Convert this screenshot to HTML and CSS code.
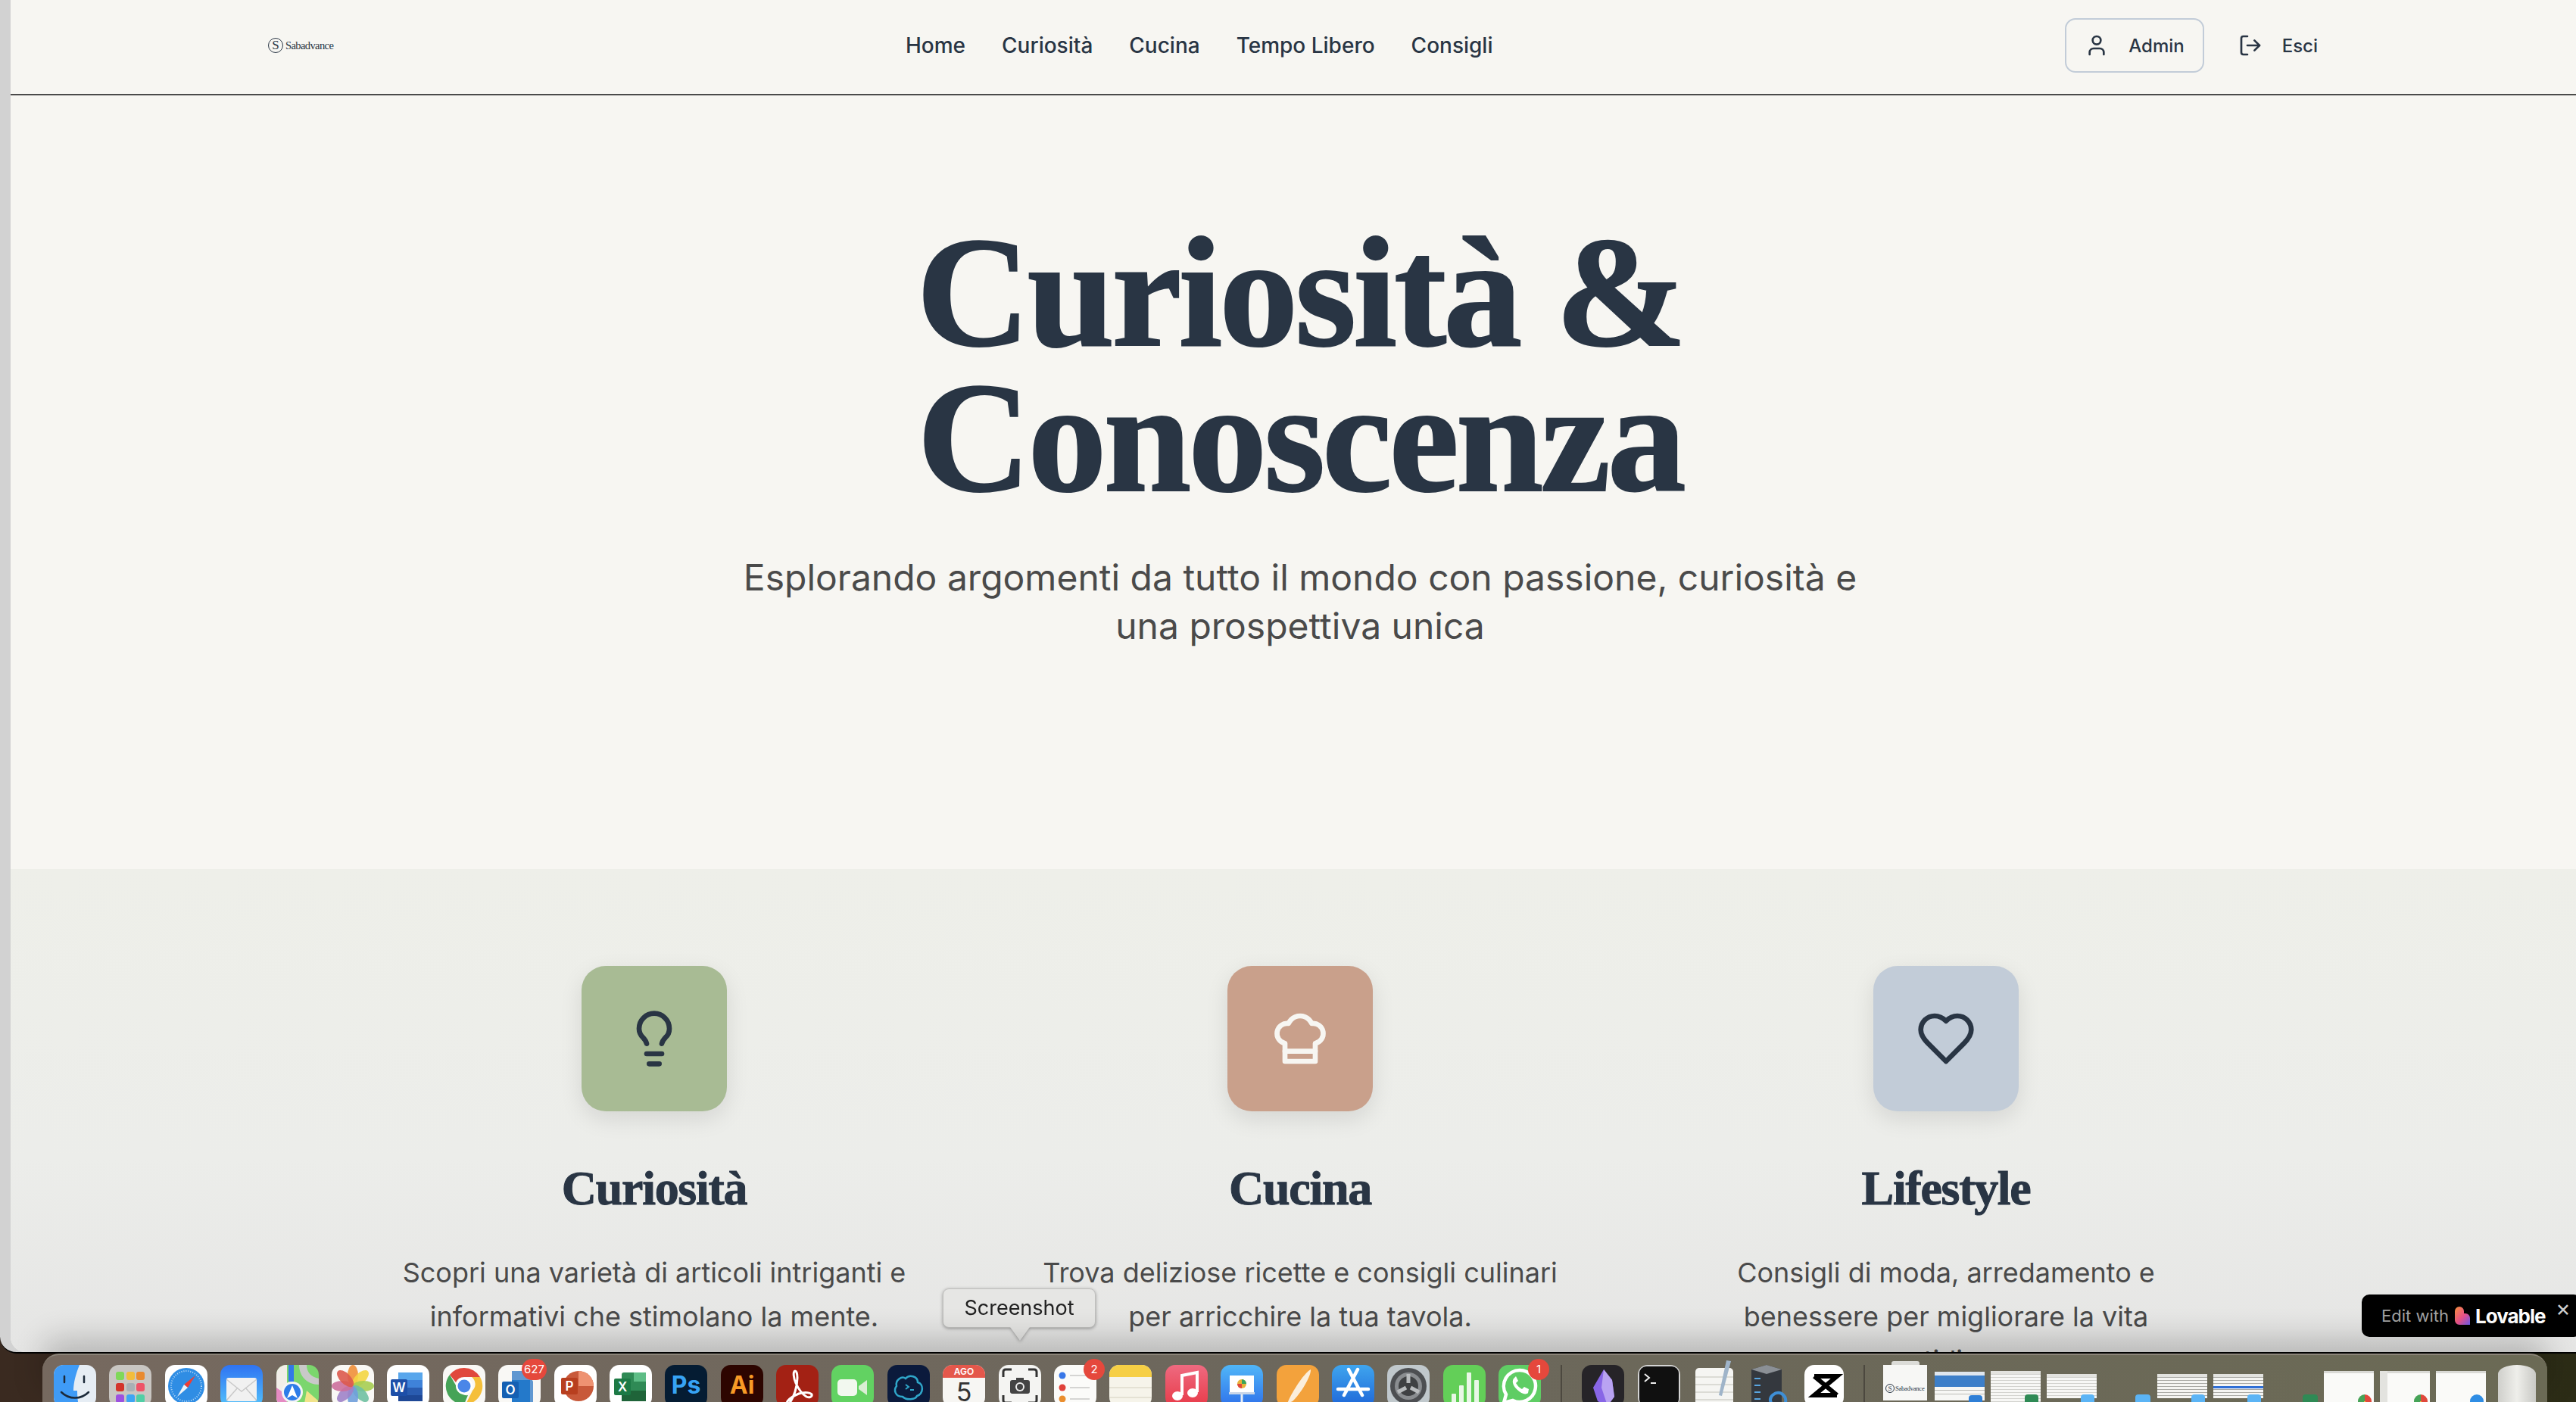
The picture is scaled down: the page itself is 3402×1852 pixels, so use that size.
FILE: index.html
```html
<!DOCTYPE html>
<html lang="it">
<head>
<meta charset="UTF-8">
<meta name="viewport" content="width=device-width, initial-scale=1.0">
<title>Sabadvance</title>
<link rel="stylesheet" href="styles.css">
</head>
<body>
<div class="window">
  <div class="page">
    <header class="topbar">
      <a class="logo" href="#"><span class="logo-mark">S</span><span class="logo-name">Sabadvance</span></a>
      <nav class="links">
        <a href="#">Home</a>
        <a href="#">Curiosità</a>
        <a href="#">Cucina</a>
        <a href="#">Tempo Libero</a>
        <a href="#">Consigli</a>
      </nav>
      <div class="actions">
        <a class="btn btn-outline" href="#">
          <svg class="btn-icon" viewBox="0 0 24 24"><path d="M19 21v-2a4 4 0 0 0-4-4H9a4 4 0 0 0-4 4v2"/><circle cx="12" cy="7" r="4"/></svg>
          Admin
        </a>
        <a class="btn" href="#">
          <svg class="btn-icon" viewBox="0 0 24 24"><path d="M9 21H5a2 2 0 0 1-2-2V5a2 2 0 0 1 2-2h4"/><polyline points="16 17 21 12 16 7"/><line x1="21" x2="9" y1="12" y2="12"/></svg>
          Esci
        </a>
      </div>
    </header>

    <section class="hero">
      <h1>Curiosità &amp;<br>Conoscenza</h1>
      <p>Esplorando argomenti da tutto il mondo con passione, curiosità e una prospettiva unica</p>
    </section>

    <section class="features">
      <div class="features-grid">
        <article class="card">
          <div class="tile tile-sage">
            <svg viewBox="0 0 24 24"><path d="M15 14c.2-1 .7-1.7 1.5-2.5 1-.9 1.5-2.2 1.5-3.5A6 6 0 0 0 6 8c0 1 .2 2.2 1.5 3.5.7.7 1.3 1.5 1.5 2.5"/><path d="M9 18h6"/><path d="M10 22h4"/></svg>
          </div>
          <h2>Curiosità</h2>
          <p>Scopri una varietà di articoli intriganti e informativi che stimolano la mente.</p>
        </article>
        <article class="card">
          <div class="tile tile-clay">
            <svg viewBox="0 0 24 24"><path d="M6 13.87A4 4 0 0 1 7.41 6a5.11 5.11 0 0 1 1.05-1.54 5 5 0 0 1 7.08 0A5.11 5.11 0 0 1 16.59 6 4 4 0 0 1 18 13.87V21H6Z"/><line x1="6" y1="17" x2="18" y2="17"/></svg>
          </div>
          <h2>Cucina</h2>
          <p>Trova deliziose ricette e consigli culinari per arricchire la tua tavola.</p>
        </article>
        <article class="card">
          <div class="tile tile-slate">
            <svg viewBox="0 0 24 24"><path d="M19 14c1.49-1.46 3-3.21 3-5.5A5.5 5.5 0 0 0 16.5 3c-1.76 0-3 .5-4.5 2-1.5-1.5-2.74-2-4.5-2A5.5 5.5 0 0 0 2 8.5c0 2.3 1.5 4.05 3 5.5l7 7Z"/></svg>
          </div>
          <h2>Lifestyle</h2>
          <p>Consigli di moda, arredamento e benessere per migliorare la vita quotidiana.</p>
        </article>
      </div>
    </section>
  </div>
</div>

<div class="lovable">
  <span class="lovable-edit">Edit with</span>
  <svg class="lovable-mark" viewBox="0 0 20 24"><defs><linearGradient id="lov" x1="0" y1="0" x2="1" y2="1"><stop offset="0" stop-color="#f7913a"/><stop offset=".55" stop-color="#e8508c"/><stop offset="1" stop-color="#6a5cf0"/></linearGradient></defs><path d="M0 6a6 6 0 0 1 12 0v3h2a6 6 0 0 1 6 6v9H6a6 6 0 0 1-6-6Z" fill="url(#lov)"/></svg>
  <span class="lovable-name">Lovable</span>
  <span class="lovable-close">×</span>
</div>

<div class="tooltip">Screenshot</div>

<footer class="dock">
  <div class="dock-apps">
    <div class="app"><svg viewBox="0 0 56 56"><rect width="56" height="56" fill="#e6edf4"/><path d="M0 0h34c-5 12-8 24-8 34h5c0 8 1 15 2 22H0Z" fill="#3f9bf6"/><path d="M14 15v8M40 15v8" stroke="#1c2a3a" stroke-width="2.5" stroke-linecap="round"/><path d="M10 36c10 10 26 10 36 0" fill="none" stroke="#1c2a3a" stroke-width="2.5" stroke-linecap="round"/></svg></div>
    <div class="app"><svg viewBox="0 0 56 56"><rect width="56" height="56" fill="#c9c6c2"/><rect x="9" y="9" width="11" height="11" rx="3" fill="#7fd858"/><rect x="23" y="9" width="11" height="11" rx="3" fill="#f2bd3c"/><rect x="36" y="9" width="11" height="11" rx="3" fill="#e98a2f"/><rect x="9" y="24" width="11" height="11" rx="3" fill="#d3342b"/><rect x="23" y="24" width="11" height="11" rx="3" fill="#a9b0b5"/><rect x="36" y="24" width="11" height="11" rx="3" fill="#ee5468"/><rect x="9" y="39" width="11" height="11" rx="3" fill="#9d50e0"/><rect x="23" y="39" width="11" height="11" rx="3" fill="#3da5f4"/><rect x="36" y="39" width="11" height="11" rx="3" fill="#50cfa5"/></svg></div>
    <div class="app"><svg viewBox="0 0 56 56"><rect width="56" height="56" fill="#fff"/><circle cx="28" cy="28" r="24" fill="#2f8de4"/><circle cx="28" cy="28" r="20" fill="none" stroke="#bcdcf7" stroke-width="2" stroke-dasharray="1 2"/><path d="M40 14 25 26l5 4Z" fill="#ef3d33"/><path d="M16 42l9-16 5 4Z" fill="#eef3f7"/></svg></div>
    <div class="app"><svg viewBox="0 0 56 56"><defs><linearGradient id="mail" x1="0" y1="0" x2="0" y2="1"><stop offset="0" stop-color="#2f73f2"/><stop offset="1" stop-color="#53c3fb"/></linearGradient></defs><rect width="56" height="56" fill="url(#mail)"/><rect x="8" y="17" width="40" height="31" rx="3" fill="#f1f1f1"/><path d="M8 19l20 16 20-16M8 47l15-17M48 47 33 30" fill="none" stroke="#c9c9c9" stroke-width="1.5"/></svg></div>
    <div class="app"><svg viewBox="0 0 56 56"><rect width="56" height="56" fill="#7bd66d"/><path d="M0 0h14v56H0Z" fill="#f1eee8"/><path d="M0 30 14 40v16H0Z" fill="#e58bc3"/><path d="M16 0h7v22h-7Z" fill="#3179e8"/><path d="M30 0h10c0 10 6 16 16 18v8C40 26 30 14 30 0Z" fill="#c9c9c9"/><path d="M40 34 56 48v8H36Z" fill="#f1e38a"/><circle cx="21" cy="36" r="14" fill="#f4f4f4"/><circle cx="21" cy="36" r="11" fill="#2d7ce8"/><path d="M21 27l7 17-7-4-7 4Z" fill="#fff"/></svg></div>
    <div class="app"><svg viewBox="0 0 56 56"><rect width="56" height="56" fill="#f9f8f5"/><g transform="translate(28 28)"><ellipse cy="-14" rx="7" ry="14" fill="#ef8f3a" opacity=".9"/><ellipse cy="-14" rx="7" ry="14" fill="#f3d544" opacity=".9" transform="rotate(45)"/><ellipse cy="-14" rx="7" ry="14" fill="#a6cd52" opacity=".9" transform="rotate(90)"/><ellipse cy="-14" rx="7" ry="14" fill="#6fc0a2" opacity=".9" transform="rotate(135)"/><ellipse cy="-14" rx="7" ry="14" fill="#6f9fdb" opacity=".9" transform="rotate(180)"/><ellipse cy="-14" rx="7" ry="14" fill="#9f82c9" opacity=".9" transform="rotate(225)"/><ellipse cy="-14" rx="7" ry="14" fill="#cc6f9c" opacity=".9" transform="rotate(270)"/><ellipse cy="-14" rx="7" ry="14" fill="#dc5a4e" opacity=".9" transform="rotate(315)"/></g></svg></div>
    <div class="app"><svg viewBox="0 0 56 56"><rect width="56" height="56" fill="#fff"/><rect x="15" y="10" width="32" height="38" rx="3" fill="#3f82d9"/><rect x="15" y="10" width="32" height="10" fill="#58a6ec"/><rect x="15" y="30" width="32" height="10" fill="#2a5cb0"/><rect x="15" y="40" width="32" height="8" fill="#1e4896"/><rect x="5" y="19" width="22" height="22" rx="2" fill="#1d4fa8"/><text class="dock-letter" x="16" y="36" font-size="17">W</text></svg></div>
    <div class="app"><svg viewBox="0 0 56 56"><rect width="56" height="56" fill="#f9f8f5"/><path d="M28 4a24 24 0 0 1 21 12H28a12 12 0 0 0-11 7L9 13A24 24 0 0 1 28 4Z" fill="#e0483c"/><path d="M49 16a24 24 0 0 1-19 36l9-18a12 12 0 0 0-1-18Z" fill="#f5bf3a"/><path d="M9 13l12 21a12 12 0 0 0 12 6l-5 12A24 24 0 0 1 9 13Z" fill="#46a357"/><circle cx="28" cy="28" r="11" fill="#fff"/><circle cx="28" cy="28" r="8.5" fill="#4a86e8"/></svg></div>
    <div class="app"><svg viewBox="0 0 56 56"><rect width="56" height="56" fill="#f9f8f5"/><rect x="18" y="20" width="24" height="30" fill="#2f8fdc"/><path d="M18 8h20l8 14v28H18Z" fill="#1f6fc2" opacity=".7"/><rect x="5" y="22" width="22" height="22" rx="2" fill="#1560b3"/><text class="dock-letter" x="16" y="39" font-size="17">O</text></svg></div>
    <div class="app"><svg viewBox="0 0 56 56"><rect width="56" height="56" fill="#fff"/><circle cx="32" cy="28" r="20" fill="#c8593a"/><path d="M32 8a20 20 0 0 1 20 20H32Z" fill="#ee9272"/><rect x="9" y="17" width="22" height="22" rx="2" fill="#b83f1f"/><text class="dock-letter" x="20" y="34" font-size="17">P</text></svg></div>
    <div class="app"><svg viewBox="0 0 56 56"><rect width="56" height="56" fill="#fff"/><rect x="16" y="10" width="32" height="38" rx="3" fill="#2f8a55"/><rect x="32" y="10" width="16" height="12" fill="#5ebd86"/><rect x="16" y="34" width="32" height="14" fill="#1f6439"/><rect x="6" y="18" width="22" height="22" rx="2" fill="#1d7a45"/><text class="dock-letter" x="17" y="35" font-size="17">X</text></svg></div>
    <div class="app"><svg viewBox="0 0 56 56"><rect width="56" height="56" fill="#051c33"/><text class="dock-brand" x="28" y="38" font-size="32" fill="#37a3f5">Ps</text></svg></div>
    <div class="app"><svg viewBox="0 0 56 56"><rect width="56" height="56" fill="#2d0500"/><text class="dock-brand" x="28" y="38" font-size="32" fill="#f89a26">Ai</text></svg></div>
    <div class="app"><svg viewBox="0 0 56 56"><rect width="56" height="56" fill="#a32114"/><path d="M25 8c-3 0-2 10 1 16 3 7 8 14 14 18 4 2 8 0 7-3-1-2-8-4-17-1-5 2-12 6-15 10-2 3 1 5 3 2 5-7 10-20 10-33 0-5-1-9-3-9Z" fill="none" stroke="#fff" stroke-width="3"/></svg></div>
    <div class="app"><svg viewBox="0 0 56 56"><rect width="56" height="56" fill="#62d262"/><rect x="8" y="19" width="26" height="22" rx="5" fill="#f2f8ef"/><path d="M36 28l11-8v20l-11-8Z" fill="#d9eed4"/></svg></div>
    <div class="app"><svg viewBox="0 0 56 56"><rect width="56" height="56" fill="#0b1a3c"/><path d="M20 42c-10 0-12-9-8-14-2-8 7-14 12-10 5-6 16-3 16 5 8 2 8 15-1 18-2 5-14 6-19 1Z" fill="none" stroke="#2fa6c9" stroke-width="2.5"/><path d="M24 26l4 3-4 3M30 33h5" fill="none" stroke="#2fa6c9" stroke-width="2"/></svg></div>
    <div class="app"><svg viewBox="0 0 56 56"><rect width="56" height="56" fill="#f7f6f3"/><rect width="56" height="17" fill="#e4574b"/><text class="dock-letter" x="28" y="13" font-size="12">AGO</text><text class="dock-day" x="28" y="48" font-size="34">5</text></svg></div>
    <div class="app"><svg viewBox="0 0 56 56"><rect width="56" height="56" fill="#f4f4f2"/><path d="M6 16V9a3 3 0 0 1 3-3h8M39 6h8a3 3 0 0 1 3 3v7M50 40v7a3 3 0 0 1-3 3h-8M17 50H9a3 3 0 0 1-3-3v-7" fill="none" stroke="#333" stroke-width="3"/><rect x="15" y="20" width="26" height="18" rx="3" fill="#444"/><rect x="23" y="17" width="10" height="4" fill="#444"/><circle cx="28" cy="29" r="6" fill="#eee"/><circle cx="28" cy="29" r="4" fill="#444"/></svg></div>
    <div class="app"><svg viewBox="0 0 56 56"><rect width="56" height="56" fill="#fbfbf9"/><circle cx="11" cy="14" r="4.5" fill="#3877e8"/><circle cx="11" cy="30" r="4.5" fill="#e0423a"/><circle cx="11" cy="45" r="4.5" fill="#ea8e2e"/><path d="M21 14h26M21 30h26M21 45h26" stroke="#c9c9c6" stroke-width="1.5"/></svg></div>
    <div class="app"><svg viewBox="0 0 56 56"><rect width="56" height="56" fill="#f6f4ea"/><rect width="56" height="16" fill="#f6cf45"/><path d="M0 30h56M0 43h56" stroke="#dfdccd" stroke-width="1.5"/></svg></div>
    <div class="app"><svg viewBox="0 0 56 56"><defs><linearGradient id="music" x1="0" y1="0" x2="0" y2="1"><stop offset="0" stop-color="#ee6a80"/><stop offset="1" stop-color="#e83a48"/></linearGradient></defs><rect width="56" height="56" fill="url(#music)"/><path d="M22 40V14l20-4v26" fill="none" stroke="#fff" stroke-width="4"/><ellipse cx="16" cy="41" rx="7" ry="6" fill="#fff"/><ellipse cx="36" cy="37" rx="7" ry="6" fill="#fff"/></svg></div>
    <div class="app"><svg viewBox="0 0 56 56"><defs><linearGradient id="keynote" x1="0" y1="0" x2="0" y2="1"><stop offset="0" stop-color="#50b6f8"/><stop offset="1" stop-color="#2f71ea"/></linearGradient></defs><rect width="56" height="56" fill="url(#keynote)"/><rect x="12" y="14" width="32" height="24" fill="#fff"/><rect x="11" y="36" width="34" height="3" fill="#c9d6e8"/><circle cx="28" cy="25" r="6" fill="#e8b23a"/><path d="M28 25V19a6 6 0 0 1 6 6Z" fill="#3aa55c"/><path d="M28 25h-6a6 6 0 0 0 6 6Z" fill="#e0483c"/><rect x="26.5" y="39" width="3" height="14" fill="#e6edf6"/></svg></div>
    <div class="app"><svg viewBox="0 0 56 56"><rect width="56" height="56" fill="#f3a23c"/><path d="M45 6c1 8-13 32-24 42l-7 3 3-7C23 32 37 10 45 6Z" fill="#fbeedb"/><rect x="8" y="52" width="40" height="2" fill="#fbeedb"/></svg></div>
    <div class="app"><svg viewBox="0 0 56 56"><defs><linearGradient id="store" x1="0" y1="0" x2="0" y2="1"><stop offset="0" stop-color="#3fa5ee"/><stop offset="1" stop-color="#1e66d8"/></linearGradient></defs><rect width="56" height="56" fill="url(#store)"/><path d="M22 6l18 34M34 6 16 40M8 32h40" stroke="#fff" stroke-width="4.5" fill="none" stroke-linecap="round"/></svg></div>
    <div class="app"><svg viewBox="0 0 56 56"><rect width="56" height="56" fill="#c0c8cc"/><circle cx="28" cy="28" r="24" fill="#4d4f52"/><circle cx="28" cy="28" r="18" fill="#8a8d90"/><circle cx="28" cy="28" r="13" fill="#3f4143"/><path d="M28 12v12M14 36l11-6M42 36l-11-6" stroke="#b9bcbe" stroke-width="5"/></svg></div>
    <div class="app"><svg viewBox="0 0 56 56"><rect width="56" height="56" fill="#63cf58"/><rect x="11" y="38" width="6" height="18" rx="1" fill="#e9f7e6"/><rect x="21" y="27" width="6" height="29" rx="1" fill="#e9f7e6"/><rect x="31" y="10" width="6" height="46" rx="1" fill="#e9f7e6"/><rect x="41" y="20" width="6" height="36" rx="1" fill="#e9f7e6"/></svg></div>
    <div class="app"><svg viewBox="0 0 56 56"><rect width="56" height="56" fill="#5fcd64"/><path d="M28 7a21 21 0 0 0-18 32L7 50l12-3A21 21 0 1 0 28 7Z" fill="none" stroke="#fff" stroke-width="4.5"/><path d="M20 18c-3 4 0 11 5 15 5 5 11 7 14 4l1-5-6-3-3 3c-4-2-6-5-8-8l3-3-3-6Z" fill="#fff"/></svg></div>
  </div>
  <div class="dock-sep"></div>
  <div class="dock-apps">
    <div class="app"><svg viewBox="0 0 56 56"><rect width="56" height="56" fill="#262428"/><path d="M29 6 15 30l6 18 13 6 9-12-3-22Z" fill="#8866e6"/><path d="M29 6l-3 24 8 24 9-12-3-22Z" fill="#b9a3f2"/></svg></div>
    <div class="app app-terminal"><svg viewBox="0 0 56 56"><rect width="56" height="56" fill="#d4d4d4"/><rect x="2" y="2" width="52" height="52" rx="9" fill="#101010"/><path d="M9 12l6 5-6 5" fill="none" stroke="#eee" stroke-width="2"/><path d="M17 24h7" stroke="#eee" stroke-width="2"/></svg></div>
    <div class="app app-plain"><svg viewBox="0 0 56 56"><rect x="3" y="4" width="50" height="52" rx="5" fill="#f5f5f2"/><path d="M3 16h50M3 26h50M3 36h50M3 46h50" stroke="#d2d2cc" stroke-width="1.5"/><path d="M44-6 34 40l4 1L50-5Z" fill="#9fb4c9"/></svg></div>
    <div class="app app-plain"><svg viewBox="0 0 56 56"><path d="M4 6 24 0l20 6v44H4Z" fill="#34383e"/><path d="M4 6l20-6 20 6-20 6Z" fill="#8b9096"/><path d="M8 18h8M8 27h8M8 36h8M8 45h8" stroke="#59a6e0" stroke-width="2"/><path d="M30 50c-4-8 6-16 14-12 6 4 8 12 0 18" fill="none" stroke="#3f8fd6" stroke-width="4"/></svg></div>
    <div class="app app-capcut"><svg viewBox="0 0 56 56"><rect width="56" height="56" fill="#fff"/><path d="M13 15h30L13 40h30M13 15l30 25" fill="none" stroke="#000" stroke-width="6"/></svg></div>
  </div>
  <div class="dock-sep dock-sep-docs"></div>
  <div class="dock-docs">
    <div class="thumb thumb-doc"><span class="logo-mark">S</span><span class="logo-name">Sabadvance</span></div>
    <div class="thumb thumb-mail"><span class="badge badge-blue"></span></div>
    <div class="thumb thumb-sheet"><span class="badge badge-green"></span></div>
    <div class="thumb thumb-sheet thumb-low"><span class="badge badge-sky"></span></div>
    <div class="lone-badge badge-sky"></div>
    <div class="thumb thumb-list thumb-low"><span class="badge badge-sky"></span></div>
    <div class="thumb thumb-list thumb-low thumb-selected"><span class="badge badge-sky"></span></div>
    <div class="lone-badge lone-badge-last badge-green"></div>
    <div class="thumb thumb-page"><span class="badge badge-chrome"></span></div>
    <div class="thumb thumb-page thumb-side"><span class="badge badge-chrome"></span></div>
    <div class="thumb thumb-page"><span class="badge badge-safari"></span></div>
    <div class="trash"></div>
  </div>
  <span class="count count-outlook">627</span>
  <span class="count count-reminders">2</span>
  <span class="count count-whatsapp">1</span>
</footer>
</body>
</html>
```

FILE: styles.css
```css
* {
    box-sizing: border-box;
}
html, body {
    margin: 0;
    height: 1852px;
    overflow: hidden;
}
body {
    position: relative;
    font-family: Inter, "Noto Sans", sans-serif;
    color: #293544;
    background: linear-gradient(90deg, #3a2a20 0%, #3a3020 50%, #2c2c16 100%);
}
a {
    color: inherit;
    text-decoration: none;
}

/* browser window */
.window {
    height: 1788px;
    padding-left: 14px;
    background: #d2d2d2;
    border-bottom: 2px solid #000;
    border-bottom-left-radius: 22px;
    overflow: hidden;
}
.page {
    width: 3406px;
    height: 1786px;
    background: #f7f6f2;
    border-bottom-left-radius: 20px;
    overflow: hidden;
}

/* top bar */
.topbar {
    display: flex;
    justify-content: space-between;
    align-items: center;
    height: 126px;
    padding: 0 335px 4px 340px;
    border-bottom: 2px solid #4a4a4a;
}
.logo {
    display: flex;
    align-items: center;
    gap: 3px;
}
.logo-mark {
    display: flex;
    justify-content: center;
    align-items: center;
    width: 20px;
    height: 20px;
    border: 1px solid #293544;
    border-radius: 50%;
    font-family: "Liberation Serif", serif;
    font-size: 17px;
}
.logo-name {
    font-family: "Liberation Serif", serif;
    font-size: 14.5px;
    letter-spacing: -.6px;
}
.links {
    display: flex;
    gap: 48px;
    font-size: 28px;
    font-weight: 500;
}
.actions {
    display: flex;
    align-items: center;
    gap: 21px;
    font-size: 24px;
    font-weight: 500;
}
.btn {
    display: flex;
    align-items: center;
    gap: 26px;
    height: 72px;
    padding: 0 24px;
}
.btn-outline {
    border: 2px solid #c2ccd8;
    border-radius: 14px;
}
.btn-icon {
    width: 32px;
    height: 32px;
    fill: none;
    stroke: #293544;
    stroke-width: 2;
    stroke-linecap: round;
    stroke-linejoin: round;
}

/* hero */
.hero {
    height: 1022px;
    padding-top: 164px;
    text-align: center;
}
.hero h1 {
    margin: 0;
    font-family: "Liberation Serif", serif;
    font-size: 208px;
    font-weight: 700;
    line-height: 192px;
    letter-spacing: -4px;
    -webkit-text-stroke: 2px #293544;
}
.hero p {
    width: 1530px;
    margin: 57px auto 0;
    font-size: 48px;
    line-height: 64px;
    color: #4a4a4a;
}

/* features */
.features {
    height: 638px;
    padding-top: 128px;
    background: linear-gradient(180deg, #eeefe9 0%, #ecedea 60%, #e5e5e4 100%);
}
.features-grid {
    display: grid;
    grid-template-columns: repeat(3, 789px);
    justify-content: center;
    gap: 64px;
}
.card {
    text-align: center;
}
.tile {
    display: flex;
    justify-content: center;
    align-items: center;
    width: 192px;
    height: 192px;
    margin: 0 auto;
    border-radius: 32px;
    box-shadow: 0 10px 30px rgba(0, 0, 0, .1);
}
.tile svg {
    width: 80px;
    height: 80px;
    fill: none;
    stroke: #293544;
    stroke-width: 2;
    stroke-linecap: round;
    stroke-linejoin: round;
}
.tile-sage {
    background: #a8bb94;
}
.tile-clay {
    background: #c9a08b;
}
.tile-clay svg {
    stroke: #f7f6f2;
}
.tile-slate {
    background: #c2ccd8;
}
.card h2 {
    margin: 62px 0 0;
    font-family: "Liberation Serif", serif;
    font-size: 64px;
    font-weight: 700;
    line-height: 80px;
    letter-spacing: -1.3px;
    -webkit-text-stroke: 1px #293544;
}
.card p {
    width: 700px;
    margin: 42px auto 0;
    font-size: 36px;
    line-height: 58px;
    color: #4a4a4a;
}

/* overlays */
.lovable {
    position: absolute;
    left: 3119px;
    top: 1710px;
    display: flex;
    align-items: center;
    width: 290px;
    height: 56px;
    padding-left: 26px;
    background: #000;
    border-radius: 10px;
}
.lovable-edit {
    font-size: 22px;
    color: #a3a3a3;
}
.lovable-mark {
    width: 20px;
    height: 24px;
    margin-left: 8px;
}
.lovable-name {
    margin-left: 7px;
    font-size: 26px;
    font-weight: 700;
    letter-spacing: -1px;
    color: #fff;
}
.lovable-close {
    position: absolute;
    left: 256px;
    top: 0;
    font-size: 30px;
    color: #ccc;
}
.tooltip {
    position: absolute;
    left: 1245px;
    top: 1702px;
    width: 202px;
    height: 52px;
    border: 1px solid #bfbfbd;
    border-radius: 8px;
    background: #e6e6e4;
    font-size: 27px;
    line-height: 50px;
    text-align: center;
    color: #222;
    filter: drop-shadow(0 1px 2px rgba(0, 0, 0, .35));
}
.tooltip::after {
    content: "";
    position: absolute;
    left: 88px;
    top: 50px;
    border: 13px solid transparent;
    border-top: 18px solid #e6e6e4;
    border-bottom: 0;
}

/* dock */
.dock {
    position: absolute;
    left: 56px;
    top: 1788px;
    display: flex;
    width: 3308px;
    height: 64px;
    padding: 13px 0 0 15px;
    overflow: hidden;
    background: linear-gradient(90deg, #76695f 0%, #6c675c 50%, #6b6a55 100%);
    border-top: 2px solid #8b8479;
    border-radius: 22px 22px 0 0;
    box-shadow: 0 -20px 40px rgba(0, 0, 0, .2);
}
.dock-apps {
    display: flex;
    gap: 17.4px;
}
.app {
    flex: none;
    width: 56px;
    height: 56px;
    border-radius: 13px;
    overflow: hidden;
}
.app svg {
    display: block;
    width: 56px;
    height: 56px;
}
.app-plain {
    overflow: visible;
}
.app-plain svg {
    overflow: visible;
}
.app-capcut {
    width: 52px;
}
.dock-letter {
    font-family: Inter, sans-serif;
    font-weight: 600;
    text-anchor: middle;
    fill: #fff;
}
.dock-day {
    font-family: Inter, sans-serif;
    text-anchor: middle;
    fill: #333;
}
.dock-brand {
    font-family: Inter, sans-serif;
    font-weight: 700;
    text-anchor: middle;
}
.dock-sep {
    flex: none;
    width: 2px;
    height: 50px;
    margin: 0 26px;
    background: #4c483f;
}
.dock-sep-docs {
    margin: 0 24px 0 26px;
}
.dock-docs {
    display: flex;
    gap: 8px;
}
.thumb {
    position: relative;
    flex: none;
    width: 66px;
    height: 44px;
    margin-top: 8px;
    background: #f7f7f5;
}
.thumb-low {
    height: 32px;
    margin-top: 12px;
}
.thumb-doc {
    display: flex;
    justify-content: center;
    align-items: center;
    gap: 1px;
    width: 58px;
    height: 47px;
    margin: 0 2px 0 0;
    padding-top: 14px;
}
.thumb-doc::before {
    content: "";
    position: absolute;
    left: 11px;
    top: -5px;
    width: 37px;
    height: 5px;
    background: #dcdcd8;
    border-radius: 3px 3px 0 0;
}
.thumb-doc .logo-mark {
    flex: none;
    width: 12px;
    height: 12px;
    font-size: 9px;
}
.thumb-doc .logo-name {
    font-size: 8.5px;
    letter-spacing: -.2px;
}
.thumb-mail {
    height: 38px;
    margin-top: 9px;
    background: linear-gradient(180deg, #dfe6ee 0 5px, #3d7fc9 5px 20px, #f7f7f5 20px 24px, #bcbcb8 24px 25px, #f7f7f5 25px 29px, #bcbcb8 29px 30px, #f7f7f5 30px);
}
.thumb-sheet {
    background: linear-gradient(180deg, #e3e3df 0 4px, transparent 4px 100%) no-repeat, repeating-linear-gradient(180deg, #d2d2ce 0 1px, #f7f7f5 1px 4px);
}
.thumb-list {
    background: linear-gradient(180deg, #e3e3df 0 4px, transparent 4px 100%) no-repeat, repeating-linear-gradient(180deg, #a9a9a4 0 1px, #f5f5f2 1px 4px);
}
.thumb-selected {
    background: linear-gradient(180deg, transparent 0 16px, #2f6fd6 16px 19px, transparent 19px), linear-gradient(180deg, #e3e3df 0 4px, transparent 4px 100%) no-repeat, repeating-linear-gradient(180deg, #a9a9a4 0 1px, #f5f5f2 1px 4px);
}
.thumb-page {
    background: linear-gradient(180deg, #d9d9d5 0 3px, #fafaf8 3px);
}
.thumb-side {
    background: linear-gradient(90deg, #e3e3df 0 10px, transparent 10px), linear-gradient(180deg, #d9d9d5 0 3px, #fafaf8 3px);
}
.badge {
    position: absolute;
    right: 3px;
    top: 31px;
    width: 18px;
    height: 18px;
    border-radius: 4px;
}
.thumb-low .badge {
    top: 27px;
}
.badge-blue {
    background: #2f7fd6;
}
.badge-green {
    background: #2f8a55;
}
.badge-sky {
    background: #5bb4f5;
}
.badge-chrome {
    background: conic-gradient(#e0483c 0 33%, #f5bf3a 33% 66%, #46a357 66%);
    border-radius: 50%;
}
.badge-safari {
    background: #2f8de4;
    border-radius: 50%;
}
.lone-badge {
    flex: none;
    width: 20px;
    height: 20px;
    margin: 39px 1px 0 43px;
    border-radius: 4px;
}
.lone-badge-last {
    margin: 39px 0 0 44px;
}
.trash {
    flex: none;
    width: 50px;
    height: 60px;
    margin-left: 8px;
    background: linear-gradient(90deg, #cfcfcb, #eeeeea 50%, #c9c9c5);
    border-radius: 50% 50% 0 0 / 12px 12px 0 0;
}
.count {
    position: absolute;
    height: 28px;
    min-width: 28px;
    padding: 0 3px;
    border-radius: 14px;
    background: #e5483c;
    color: #fff;
    font-size: 15px;
    line-height: 28px;
    text-align: center;
}
.count-outlook {
    left: 633px;
    top: 5px;
}
.count-reminders {
    left: 1375px;
    top: 5px;
}
.count-whatsapp {
    left: 1962px;
    top: 5px;
}
```
